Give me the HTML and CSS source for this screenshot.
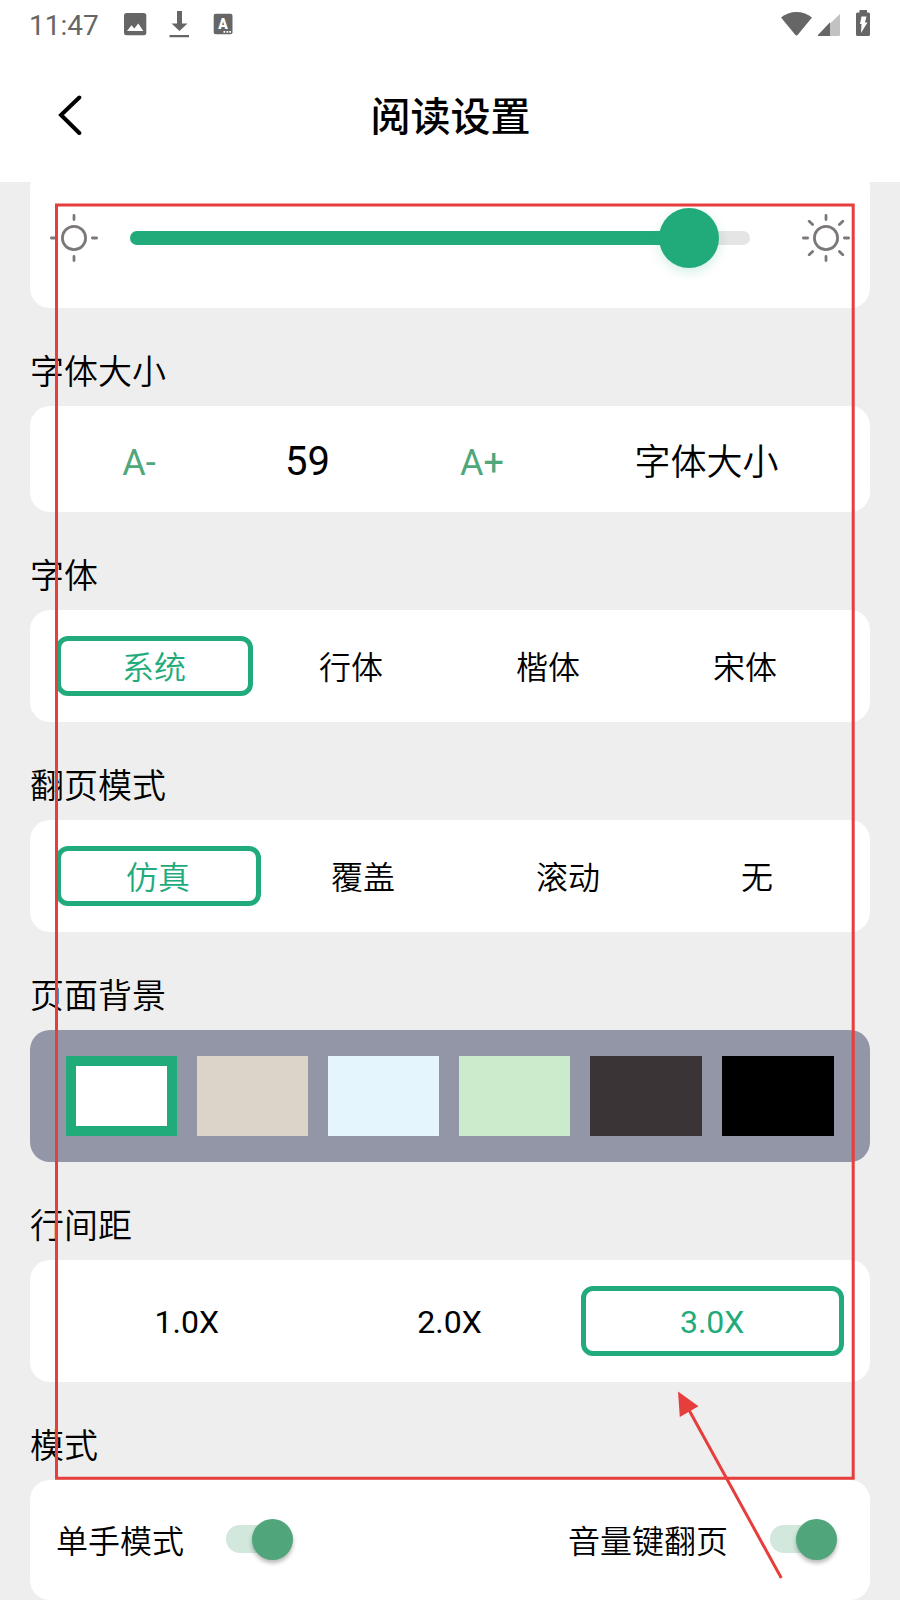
FILE: index.html
```html
<!DOCTYPE html>
<html lang="zh-CN">
<head>
<meta charset="utf-8">
<title>阅读设置</title>
<link rel="stylesheet" href="styles.css">
</head>
<body>
<div class="screen">
  <header class="top">
    <div class="status">
      <span class="clock">11:47</span>
      <svg class="status-left" width="110" height="28" viewBox="124 10 110 28">
        <rect x="124" y="13" width="22.300" height="22.300" rx="2.500" fill="#666"/>
        <path d="M127 31l4.500-5.800 2.800 3.200 4-5 5 7.600z" fill="#fff"/>
        <path d="M177 11h5v12.500h5.500L179.500 31l-8-7.500h5.500zM169.500 35h19.500v2.300h-19.500z" fill="#666"/>
        <rect x="213.700" y="13.700" width="18.800" height="20.500" rx="2" fill="#666"/>
        <text x="223" y="29" class="badge-letter">A</text>
        <path d="M223.500 31h1.700v1.700h-1.700zM226.500 31h1.700v1.700h-1.700zM229.300 31h1.700v1.700h-1.700z" fill="#fff"/>
      </svg>
      <svg class="status-right" width="90" height="28" viewBox="781 10 90 28">
        <path d="M781 17.500C789.500 10 803.500 10 812 17.500L798 34.500q-1.500 1.800-3 0z" fill="#666"/>
        <path d="M840 14v20.500q0 1.500-1.500 1.500H819q-2 0-.500-1.500z" fill="#c2c2c2"/>
        <path d="M830 22.300V36h-11q-2 0-.500-1.500z" fill="#666"/>
        <path d="M859.500 10h7.500v2.500h1.500q1.500 0 1.500 1.500v20.500q0 1.500-1.500 1.500h-11q-1.500 0-1.500-1.500V14q0-1.500 1.500-1.500h2z" fill="#666"/>
        <path d="M861.500 16.500h5l-1.500 6h2.500l-6.500 10.500 .500-9h-1.500z" fill="#fff"/>
      </svg>
    </div>
    <div class="titlebar">
      <svg class="back" width="24" height="42" viewBox="58 94 24 42"><path d="M79.300 97.500L61 115l18.300 18" fill="none" stroke="#000" stroke-width="4" stroke-linecap="round"/></svg>
      <h1 class="title">阅读设置</h1>
    </div>
  </header>

  <main class="content">
    <section class="card brightness">
      <svg class="sun" width="50" height="50" viewBox="-25 -25 50 50"><circle r="11.600"/><path d="M0-22.600v4.200M0 22.600v-4.200M-22.600 0h4.200M22.600 0h-4.200"/></svg>
      <div class="slider"><div class="slider-fill"></div><div class="slider-thumb"></div></div>
      <svg class="sun" width="50" height="50" viewBox="-25 -25 50 50"><circle r="11.600"/><path d="M0-22.600v4.200M0 22.600v-4.200M-22.600 0h4.200M22.600 0h-4.200M-16.800-16.800l3.400 3.400M16.800-16.800l-3.400 3.400M-16.800 16.800l3.400-3.400M16.800 16.800l-3.400-3.400"/></svg>
    </section>

    <h2 class="heading">字体大小</h2>
    <section class="card size-row">
      <span class="step">A-</span><span class="size-value">59</span><span class="step">A+</span><span class="size-label">字体大小</span>
    </section>

    <h2 class="heading">字体</h2>
    <section class="card options">
      <span class="option selected">系统</span><span class="option">行体</span><span class="option">楷体</span><span class="option">宋体</span>
    </section>

    <h2 class="heading">翻页模式</h2>
    <section class="card options">
      <span class="option selected">仿真</span><span class="option">覆盖</span><span class="option">滚动</span><span class="option">无</span>
    </section>

    <h2 class="heading">页面背景</h2>
    <section class="card swatches">
      <span class="swatch white"></span><span class="swatch sand"></span><span class="swatch sky"></span><span class="swatch mint"></span><span class="swatch brown"></span><span class="swatch black"></span>
    </section>

    <h2 class="heading">行间距</h2>
    <section class="card options spacing">
      <span class="option">1.0X</span><span class="option">2.0X</span><span class="option selected">3.0X</span>
    </section>

    <h2 class="heading">模式</h2>
    <section class="card modes">
      <div class="mode"><span>单手模式</span><span class="switch"><span class="knob"></span></span></div>
      <div class="mode"><span>音量键翻页</span><span class="switch"><span class="knob"></span></span></div>
    </section>
  </main>

  <svg class="annotation" width="900" height="1600" viewBox="0 0 900 1600">
    <path d="M56.500 205H853.200V1478.200H56.500z" fill="none" stroke="#e63d3d" stroke-width="3"/>
    <path d="M689 1410L781.300 1578" stroke="#e63d3d" stroke-width="3"/>
    <path d="M678 1391.500L698.500 1406.300 679.800 1417z" fill="#e63d3d"/>
  </svg>
</div>
</body>
</html>
```
FILE: styles.css
```css
* { box-sizing: border-box; }
body {
  margin: 0;
  color: #000;
  background: #eee;
  font-family: "Noto Sans CJK SC", sans-serif;
  font-weight: 350;
}
.screen {
  position: relative;
  width: 900px;
  height: 1600px;
  overflow: hidden;
}
.top {
  height: 182px;
  background: #fff;
}
.status {
  display: flex;
  height: 48px;
  padding: 10px 29px 0 29px;
}
.clock {
  width: 95px;
  color: #666;
  font: 400 28px/32px Roboto, sans-serif;
}
.status-right { margin-left: auto; }
.badge-letter {
  fill: #fff;
  font: 900 14px Roboto, sans-serif;
  text-anchor: middle;
}
.titlebar {
  display: grid;
  grid-template-columns: 1fr auto 1fr;
  align-items: center;
  height: 134px;
  padding: 0 57px 0 58px;
}
.title {
  margin: 0;
  font-size: 40px;
  font-weight: 500;
  line-height: 132px;
  height: 134px;
}
.content { padding: 0 30px; }
.card {
  background: #fff;
  border-radius: 20px;
}
.brightness {
  display: flex;
  align-items: center;
  height: 140px;
  margin-top: -14px;
  padding: 0 19px;
}
.sun {
  fill: none;
  stroke: #7d7878;
  stroke-width: 2.8;
  stroke-linecap: round;
}
.slider {
  position: relative;
  width: 620px;
  height: 14px;
  margin: 0 51px 0 31px;
  border-radius: 7px;
  background: #e5e5e5;
}
.slider-fill {
  width: 559px;
  height: 14px;
  border-radius: 7px;
  background: #21ab7a;
}
.slider-thumb {
  position: absolute;
  left: 529px;
  top: -23px;
  width: 60px;
  height: 60px;
  border-radius: 50%;
  background: #21ab7a;
  box-shadow: 0 4px 12px rgba(33, 171, 122, .2);
}
.heading {
  height: 98px;
  margin: 0;
  padding-top: 13px;
  font-size: 34px;
  font-weight: 350;
  line-height: 98px;
}
.size-row {
  display: grid;
  grid-template-columns: 218px 119px 230px 219px;
  align-items: center;
  height: 106px;
  text-align: center;
}
.step {
  padding-top: 7px;
  color: #50a77c;
  font: 36px/44px Roboto, sans-serif;
}
.size-value { padding-top: 6px; font: 40px/48px Roboto, sans-serif; }
.size-label { font-size: 36px; line-height: 48px; }
.options {
  display: flex;
  height: 112px;
  padding: 26px;
}
.option {
  flex: 1 1 auto;
  padding-right: 1px;
  border: 5px solid transparent;
  border-radius: 12px;
  font-size: 32px;
  line-height: 48px;
  text-align: center;
}
.selected { color: #21ab7a; border-color: #21ab7a; }
.spacing { height: 122px; }
.spacing .option { flex-basis: 0; font-family: Roboto, sans-serif; font-weight: 400; line-height: 62px; }
.swatches {
  display: grid;
  grid-template-columns: repeat(4, 111px) repeat(2, 112px);
  gap: 20px;
  height: 132px;
  padding: 26px 36px;
  background: #9396a7;
}
.white { background: #fff; border: 10px solid #21ab7a; }
.sand { background: #dcd4c9; }
.sky { background: #e5f5fd; }
.mint { background: #cbebcd; }
.brown { background: #3b3436; }
.black { background: #000; }
.modes {
  display: flex;
  justify-content: space-between;
  height: 120px;
  padding: 0 33px 2px 26px;
}
.mode {
  display: flex;
  align-items: center;
  gap: 42px;
  font-size: 32px;
  line-height: 48px;
}
.switch {
  display: flex;
  align-items: center;
  justify-content: flex-end;
  width: 67px;
  height: 28px;
  border-radius: 14px;
  background: #d2e8dd;
}
.knob {
  flex: none;
  width: 41px;
  height: 41px;
  border-radius: 50%;
  background: #50a57b;
  box-shadow: 0 3px 4px rgba(0, 0, 0, .28);
}
.annotation {
  position: absolute;
  left: 0;
  top: 0;
  pointer-events: none;
}
```
